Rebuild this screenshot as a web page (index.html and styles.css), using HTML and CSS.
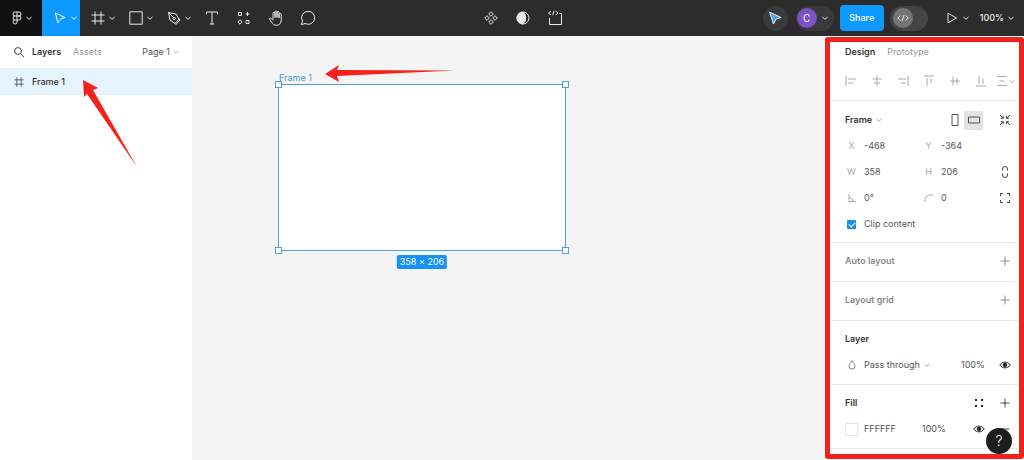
FILE: index.html
```
<!DOCTYPE html>
<html lang="en">
<head>
<meta charset="utf-8">
<title>Design editor</title>
<link rel="stylesheet" href="styles.css">
</head>
<body>
<svg class="defs" aria-hidden="true">
  <symbol id="chev" viewBox="0 0 8 8"><path d="M1.500 3 4 5.300 6.500 3"/></symbol>
  <symbol id="plus" viewBox="0 0 12 12"><path d="M6 1.500v9M1.500 6h9"/></symbol>
  <symbol id="eye" viewBox="0 0 12 12"><path d="M.8 6C3.200 2.200 8.800 2.200 11.200 6 8.800 9.800 3.200 9.800.8 6z"/><circle cx="6" cy="6" r="1.800" fill="currentColor"/></symbol>
  <symbol id="hash" viewBox="0 0 14 14"><path d="M4 .5v13M10 .5v13M.5 4h13M.5 10h13"/></symbol>
</svg>
<div class="app">
  <header class="toolbar">
    <nav class="tools">
      <button class="tool menu" aria-label="Main menu"><svg class="i14" viewBox="0 0 14 14"><path d="M7 1H5a2 2 0 0 0 0 4h4a2 2 0 0 0 0-4H7v10a2 2 0 1 1-2-2h2M5 5a2 2 0 0 0 0 4M7 5h2a2 2 0 1 1 0 4H7"/></svg><svg class="i8"><use href="#chev"/></svg></button>
      <button class="tool wide active" aria-label="Move"><svg class="i14" viewBox="0 0 14 14"><path d="M2.500 2 12 6.500 7.500 8 4.800 12z"/></svg><svg class="i8"><use href="#chev"/></svg></button>
      <button class="tool wide" aria-label="Frame"><svg class="i14"><use href="#hash"/></svg><svg class="i8"><use href="#chev"/></svg></button>
      <button class="tool wide" aria-label="Rectangle"><svg class="i14" viewBox="0 0 14 14"><path d="M.8.8h12.400v12.400H.8z"/></svg><svg class="i8"><use href="#chev"/></svg></button>
      <button class="tool wide" aria-label="Pen"><svg class="i14" viewBox="0 0 14 14"><path d="M1.500 1.500 3 9l5 3.500 4-4.500L9 3zM1.500 1.500 6.500 6.800M8 12.500l1 1 4-4.500-1-1"/><circle cx="7.200" cy="7.500" r="1.100"/></svg><svg class="i8"><use href="#chev"/></svg></button>
      <button class="tool" aria-label="Text"><svg class="i14" viewBox="0 0 14 14"><path d="M1.500 3.500V1h11v2.500M7 1v12M4.800 13h4.400"/></svg></button>
      <button class="tool" aria-label="Resources"><svg class="i14" viewBox="0 0 14 14"><path d="M1.500 1.500h3v3h-3zM9 9.500h3v3H9zM10.500 1v4M8.500 3h4M3 8.800 5.200 11 3 13.200.8 11z"/></svg></button>
      <button class="tool" aria-label="Hand"><svg class="i16" viewBox="0 0 16 16"><path d="M5 9.500V3.200a1 1 0 0 1 2 0V7.500 2a1 1 0 0 1 2 0v5.500V2.500a1 1 0 0 1 2 0V8 4.500a1 1 0 0 1 2.200 0V10c0 3-1.700 5.300-4.700 5.300-2.500 0-3.800-1.300-4.800-3.100L1.500 9.300C1 8.200 2.300 7.500 3.200 8.400L5 10.300"/></svg></button>
      <button class="tool" aria-label="Comment"><svg class="i16" viewBox="0 0 16 16"><path d="M8.200 1.300a6.500 6.500 0 1 1-3.100 12.200L1.300 14.600l1.200-3.500A6.500 6.500 0 0 1 8.200 1.300z"/></svg></button>
    </nav>
    <nav class="context">
      <button class="tool" aria-label="Component"><svg class="i14" viewBox="0 0 14 14"><path d="M7 .7 9.300 3 7 5.300 4.700 3zM3 4.700 5.300 7 3 9.300.7 7zM11 4.700 13.300 7 11 9.300 8.700 7zM7 8.700 9.300 11 7 13.300 4.700 11z"/></svg></button>
      <button class="tool" aria-label="Mask"><svg class="i14" viewBox="0 0 14 14"><circle cx="7" cy="7" r="6"/><path fill="currentColor" d="M7 1a6 6 0 0 0 0 12 8 8 0 0 0 0-12z"/></svg></button>
      <button class="tool" aria-label="Ready for development"><svg class="i16" viewBox="0 0 16 16"><path d="M2.500 8v6.500h12V3.500H12.500M4 1 1.500 3 4 5M8.700 1 11 3 8.700 5M7 .8 5.700 5.200"/></svg></button>
    </nav>
    <div class="session">
      <button class="round" aria-label="Spotlight"><svg class="i14" viewBox="0 0 14 14"><path class="pointer" d="M1.500 1 13 6.500 8 8 5.500 13z"/></svg></button>
      <button class="account" aria-label="Account"><span class="avatar">C</span><svg class="i8"><use href="#chev"/></svg></button>
      <button class="share">Share</button>
      <button class="devmode" aria-label="Dev mode"><span class="knob"><svg class="i12" viewBox="0 0 12 12"><path d="M3.300 3.500.8 6l2.500 2.500M8.700 3.500 11.200 6 8.700 8.500M7 3 5 9"/></svg></span></button>
      <button class="present" aria-label="Present"><svg class="i12" viewBox="0 0 12 12"><path d="M2 1.200 10.500 6 2 10.800z"/></svg><svg class="i8"><use href="#chev"/></svg></button>
      <button class="zoom">100%<svg class="i8"><use href="#chev"/></svg></button>
    </div>
  </header>
  <main class="workspace">
    <aside class="layers">
      <div class="layers-head">
        <button class="icon" aria-label="Search"><svg class="i12" viewBox="0 0 12 12"><circle cx="5" cy="5" r="3.400"/><path d="M7.500 7.500 11 11"/></svg></button>
        <button class="tab on">Layers</button>
        <button class="tab">Assets</button>
        <button class="page">Page 1<svg class="i8 pale"><use href="#chev"/></svg></button>
      </div>
      <button class="layer"><svg class="i10"><use href="#hash"/></svg>Frame 1</button>
    </aside>
    <section class="canvas" aria-label="Canvas">
      <div class="artboard">
        <span class="artboard-name">Frame 1</span>
        <i class="handle nw"></i><i class="handle ne"></i><i class="handle sw"></i><i class="handle se"></i>
        <span class="size">358 × 206</span>
      </div>
    </section>
    <aside class="inspector">
      <div class="tabs"><button class="tab on">Design</button><button class="tab">Prototype</button></div>
      <div class="align">
        <button aria-label="Align left"><svg class="i12" viewBox="0 0 12 12"><path d="M1 1v10M3 4h8M3 8h5"/></svg></button>
        <button aria-label="Align horizontal centers"><svg class="i12" viewBox="0 0 12 12"><path d="M6 1v10M1.500 4h9M3 8h6"/></svg></button>
        <button aria-label="Align right"><svg class="i12" viewBox="0 0 12 12"><path d="M11 1v10M1 4h8M4 8h5"/></svg></button>
        <button aria-label="Align top"><svg class="i12" viewBox="0 0 12 12"><path d="M1 1h10M4 3v8M8 3v5"/></svg></button>
        <button aria-label="Align vertical centers"><svg class="i12" viewBox="0 0 12 12"><path d="M1 6h10M4 1.500v9M8 3v6"/></svg></button>
        <button aria-label="Align bottom"><svg class="i12" viewBox="0 0 12 12"><path d="M1 11h10M4 1v8M8 4v5"/></svg></button>
        <button class="more" aria-label="Distribute"><svg class="i12" viewBox="0 0 12 12"><path d="M1 1.500h10M3.500 6h5M1 10.500h10"/></svg><svg class="i8"><use href="#chev"/></svg></button>
      </div>
      <section class="group props">
        <div class="line">
          <button class="pick strong">Frame<svg class="i8 pale"><use href="#chev"/></svg></button>
          <span class="push orient">
            <button aria-label="Portrait"><svg class="i12" viewBox="0 0 12 12"><path d="M3 .5h6v11H3z"/></svg></button>
            <button class="on" aria-label="Landscape"><svg class="i12" viewBox="0 0 12 12"><path d="M.5 3h11v6H.5z"/></svg></button>
          </span>
          <button class="icon" aria-label="Resize to fit"><svg class="i12" viewBox="0 0 12 12"><path d="M1 1l3 3M11 1 8 4M1 11l3-3M11 11 8 8"/><path class="dots" d="M4.800 1.500v3.300H1.500zM7.200 1.500v3.300h3.300zM4.800 10.500V7.200H1.500zM7.200 10.500V7.200h3.300z"/></svg></button>
        </div>
        <div class="fields">
          <label for="x">X</label><input id="x" value="-468">
          <label for="y">Y</label><input id="y" value="-364">
        </div>
        <div class="fields">
          <label for="w">W</label><input id="w" value="358">
          <label for="h">H</label><input id="h" value="206">
          <button class="icon" aria-label="Constrain proportions"><svg class="i12" viewBox="0 0 12 12"><path d="M3.500 4.500V3a2.500 2.500 0 0 1 5 0v1.500M3.500 7.500V9a2.500 2.500 0 0 0 5 0V7.500"/></svg></button>
        </div>
        <div class="fields">
          <label for="r" aria-label="Rotation"><svg class="i10" viewBox="0 0 10 10"><path d="M2 1v7.500h7M2 4.500a4 4 0 0 1 4 4"/></svg></label><input id="r" value="0°">
          <label for="c" aria-label="Corner radius"><svg class="i10" viewBox="0 0 10 10"><path d="M1 9V7a5 5 0 0 1 5-5h3"/></svg></label><input id="c" value="0">
          <button class="icon" aria-label="Independent corners"><svg class="i12" viewBox="0 0 12 12"><path d="M1.500 4V1.500H4M8 1.500h2.500V4M10.500 8v2.500H8M4 10.500H1.500V8"/></svg></button>
        </div>
        <label class="clip"><input type="checkbox" checked>Clip content</label>
      </section>
      <section class="group single"><div class="line"><h2 class="muted">Auto layout</h2><button class="icon push soft" aria-label="Add auto layout"><svg class="i12"><use href="#plus"/></svg></button></div></section>
      <section class="group single"><div class="line"><h2 class="muted">Layout grid</h2><button class="icon push soft" aria-label="Add layout grid"><svg class="i12"><use href="#plus"/></svg></button></div></section>
      <section class="group">
        <div class="line"><h2>Layer</h2></div>
        <div class="line">
          <span class="lead"><svg class="i10" viewBox="0 0 10 10"><path d="M5 .8C3.500 2.800 2 4.200 2 6a3 3 0 0 0 6 0C8 4.200 6.500 2.800 5 .8z"/></svg></span>
          <button class="pick">Pass through<svg class="i8 pale"><use href="#chev"/></svg></button>
          <input class="push percent" aria-label="Layer opacity" value="100%">
          <button class="icon dark" aria-label="Toggle layer"><svg class="i12"><use href="#eye"/></svg></button>
        </div>
      </section>
      <section class="group">
        <div class="line"><h2>Fill</h2>
          <button class="icon push dark" aria-label="Styles"><svg class="i12" viewBox="0 0 12 12"><path class="dots" d="M2 2h2v2H2zM8 2h2v2H8zM2 8h2v2H2zM8 8h2v2H8z"/></svg></button>
          <button class="icon gap" aria-label="Add fill"><svg class="i12"><use href="#plus"/></svg></button>
        </div>
        <div class="line">
          <span class="lead"><button class="swatch" aria-label="Fill color"></button></span>
          <input class="hex" aria-label="Hex" value="FFFFFF">
          <input class="percent" aria-label="Fill opacity" value="100%">
          <button class="icon push dark" aria-label="Toggle fill"><svg class="i12"><use href="#eye"/></svg></button>
          <button class="icon gap" aria-label="Remove fill"><svg class="i12" viewBox="0 0 12 12"><path d="M1.500 6h9"/></svg></button>
        </div>
      </section>
      <div class="highlight"></div>
      <button class="help" aria-label="Help">?</button>
    </aside>
  </main>
  <svg class="arrow side" viewBox="0 0 56 88"><path d="M1 0 16 8 11 10 55 87 5 14 2 17z"/></svg>
  <svg class="arrow top" viewBox="0 0 130 18"><path d="M0 9 14 0 12 5 130 5.500 12 11 14 17z"/></svg>
</div>
</body>
</html>
```

FILE: styles.css
```
* { box-sizing: border-box; }
body { margin: 0; font: 9px/14px Inter, "Liberation Sans", sans-serif; color: #555; }
button, input { font: inherit; color: inherit; background: none; border: 0; padding: 0; margin: 0; }
button { display: flex; align-items: center; }
h2 { font: inherit; font-weight: 600; margin: 0; color: #333; }
svg { fill: none; stroke: currentColor; flex: none; display: block; }
.defs { position: absolute; width: 0; height: 0; }
.i8 { width: 8px; height: 8px; }
.i10 { width: 10px; height: 10px; }
.i12 { width: 12px; height: 12px; }
.i14 { width: 14px; height: 14px; }
.i16 { width: 16px; height: 16px; }
.pale { color: #aaa; }
.app { position: relative; display: flex; flex-direction: column; min-height: 100vh; }

.toolbar { display: grid; grid-template-columns: 1fr auto 1fr; height: 36px; background: #2c2c2c; color: #e8e8e8; }
.tools, .context, .session { display: flex; align-items: center; }
.tool { justify-content: center; width: 32px; height: 36px; }
.menu { width: 42px; gap: 1px; background: #111; }
.wide { width: 38px; gap: 3px; padding-left: 8px; }
.active { background: #0d99ff; color: #fff; }
.wide + .tool:not(.wide) { margin-left: 2px; }
.context { padding-left: 22px; }
.session { justify-content: flex-end; padding-right: 9px; }
.round { justify-content: center; width: 25px; height: 25px; border-radius: 50%; background: #3a3a3a; }
.pointer { fill: #4da5e6; stroke: #d8efff; }
.account { width: 38px; height: 25px; margin-left: 8px; padding-left: 1px; gap: 4px; border-radius: 13px; background: #3a3a3a; }
.avatar { width: 20px; height: 20px; font-size: 10px; line-height: 20px; border-radius: 50%; background: #7b52c5; color: #fff; }
.share { justify-content: center; width: 44px; height: 26px; margin-left: 6px; border-radius: 4px; background: #0d99ff; color: #fff; font-weight: 500; }
.devmode { width: 38px; height: 25px; margin-left: 6px; padding-left: 3px; border-radius: 13px; background: #444; }
.knob { display: grid; place-items: center; width: 20px; height: 20px; border-radius: 50%; background: #757575; }
.present { margin-left: 18px; gap: 4px; }
.zoom { margin-left: 10px; gap: 3px; font-weight: 500; }

.workspace { flex: 1; display: flex; }
.layers { width: 192px; background: #fff; }
.layers-head { display: flex; align-items: center; height: 32px; padding: 0 12px 0 13px; }
.icon { justify-content: center; width: 12px; height: 16px; color: #444; }
.tab { color: #999; }
.tab.on { color: #333; font-weight: 600; }
.layers-head .tab { margin-left: 7px; }
.layers-head .tab + .tab { margin-left: 12px; }
.page { margin-left: auto; gap: 2px; }
.layer { width: 100%; height: 27px; padding-left: 14px; gap: 8px; background: #e5f4ff; color: #333; font-weight: 500; }

.canvas { position: relative; flex: 1; background: #f4f4f4; }
.artboard { position: absolute; left: 86px; top: 48px; width: 288px; height: 167px; border: 1px solid #4aa3df; background: #fff; }
.artboard-name { position: absolute; left: 0; top: -14px; color: #4a9ad4; }
.handle { position: absolute; width: 7px; height: 7px; border: 1px solid #4aa3df; background: #fff; }
.nw, .sw { left: -4px; }
.ne, .se { right: -4px; }
.nw, .ne { top: -4px; }
.sw, .se { bottom: -4px; }
.size { position: absolute; top: 100%; left: 50%; translate: -50% 5px; padding: 0 3px; border-radius: 2px; background: #1592f3; color: #fff; white-space: nowrap; }

.inspector { position: relative; width: 196px; padding-left: 4px; background: #fff; }
.tabs { display: flex; align-items: center; gap: 12px; height: 32px; padding-left: 13px; }
.align { display: flex; align-items: center; height: 26px; padding-left: 6px; margin-bottom: 6px; color: #aaa; }
.align button { justify-content: center; width: 26px; height: 26px; }
.align .more { width: 24px; }
.group { padding: 5px 13px 6px; border-top: 1px solid #e9e9e9; }
.group.single { padding-bottom: 7px; }
.group.props { padding: 6px 13px 5px; }
.group:last-of-type { border-bottom: 1px solid #e9e9e9; }
.line, .fields, .clip { display: flex; align-items: center; height: 26px; }
.push { margin-left: auto; }
.pick { gap: 3px; }
.strong { color: #333; font-weight: 600; }
h2.muted { color: #8a8a8a; }
.soft { color: #8a8a8a; }
.dark { color: #222; }
.orient { display: flex; margin-right: 16px; color: #555; }
.orient button { justify-content: center; width: 19px; height: 19px; }
.orient .on { background: #e3e3e3; }
.fields { display: grid; grid-template-columns: 13px 52px 13px 1fr 12px; column-gap: 6px; }
.fields label { display: grid; place-items: center; color: #aaa; }
.fields input { width: 100%; min-width: 0; }
.clip { gap: 8px; padding-left: 2px; }
.clip input { appearance: none; display: grid; place-items: center; width: 9px; height: 9px; border-radius: 1px; background: #1c8fea; }
.clip input::after { content: ""; width: 5px; height: 3px; border: solid #fff; border-width: 0 0 1px 1px; rotate: -45deg; }
.lead { display: flex; justify-content: center; width: 13px; margin-right: 6px; color: #888; }
.percent { width: 32px; }
.line .push.percent { margin-right: 6px; }
.hex { width: 58px; }
.gap { margin-left: 14px; }
.swatch { width: 13px; height: 13px; border: 1px solid #e4e4e4; background: #fff; }
.dots { fill: currentColor; stroke: none; }
.highlight { position: absolute; inset: 1px 0 1px -3px; border: 5px solid #f0221b; border-radius: 3px; pointer-events: none; }
.help { position: absolute; right: 12px; bottom: 6px; justify-content: center; width: 26px; height: 26px; border-radius: 50%; background: #1e1e1e; color: #fff; font-size: 14px; font-weight: 300; }
.arrow { position: absolute; fill: #f5221b; stroke: none; pointer-events: none; }
.side { left: 82px; top: 80px; width: 56px; height: 88px; }
.top { left: 325px; top: 65px; width: 130px; height: 18px; }
```
